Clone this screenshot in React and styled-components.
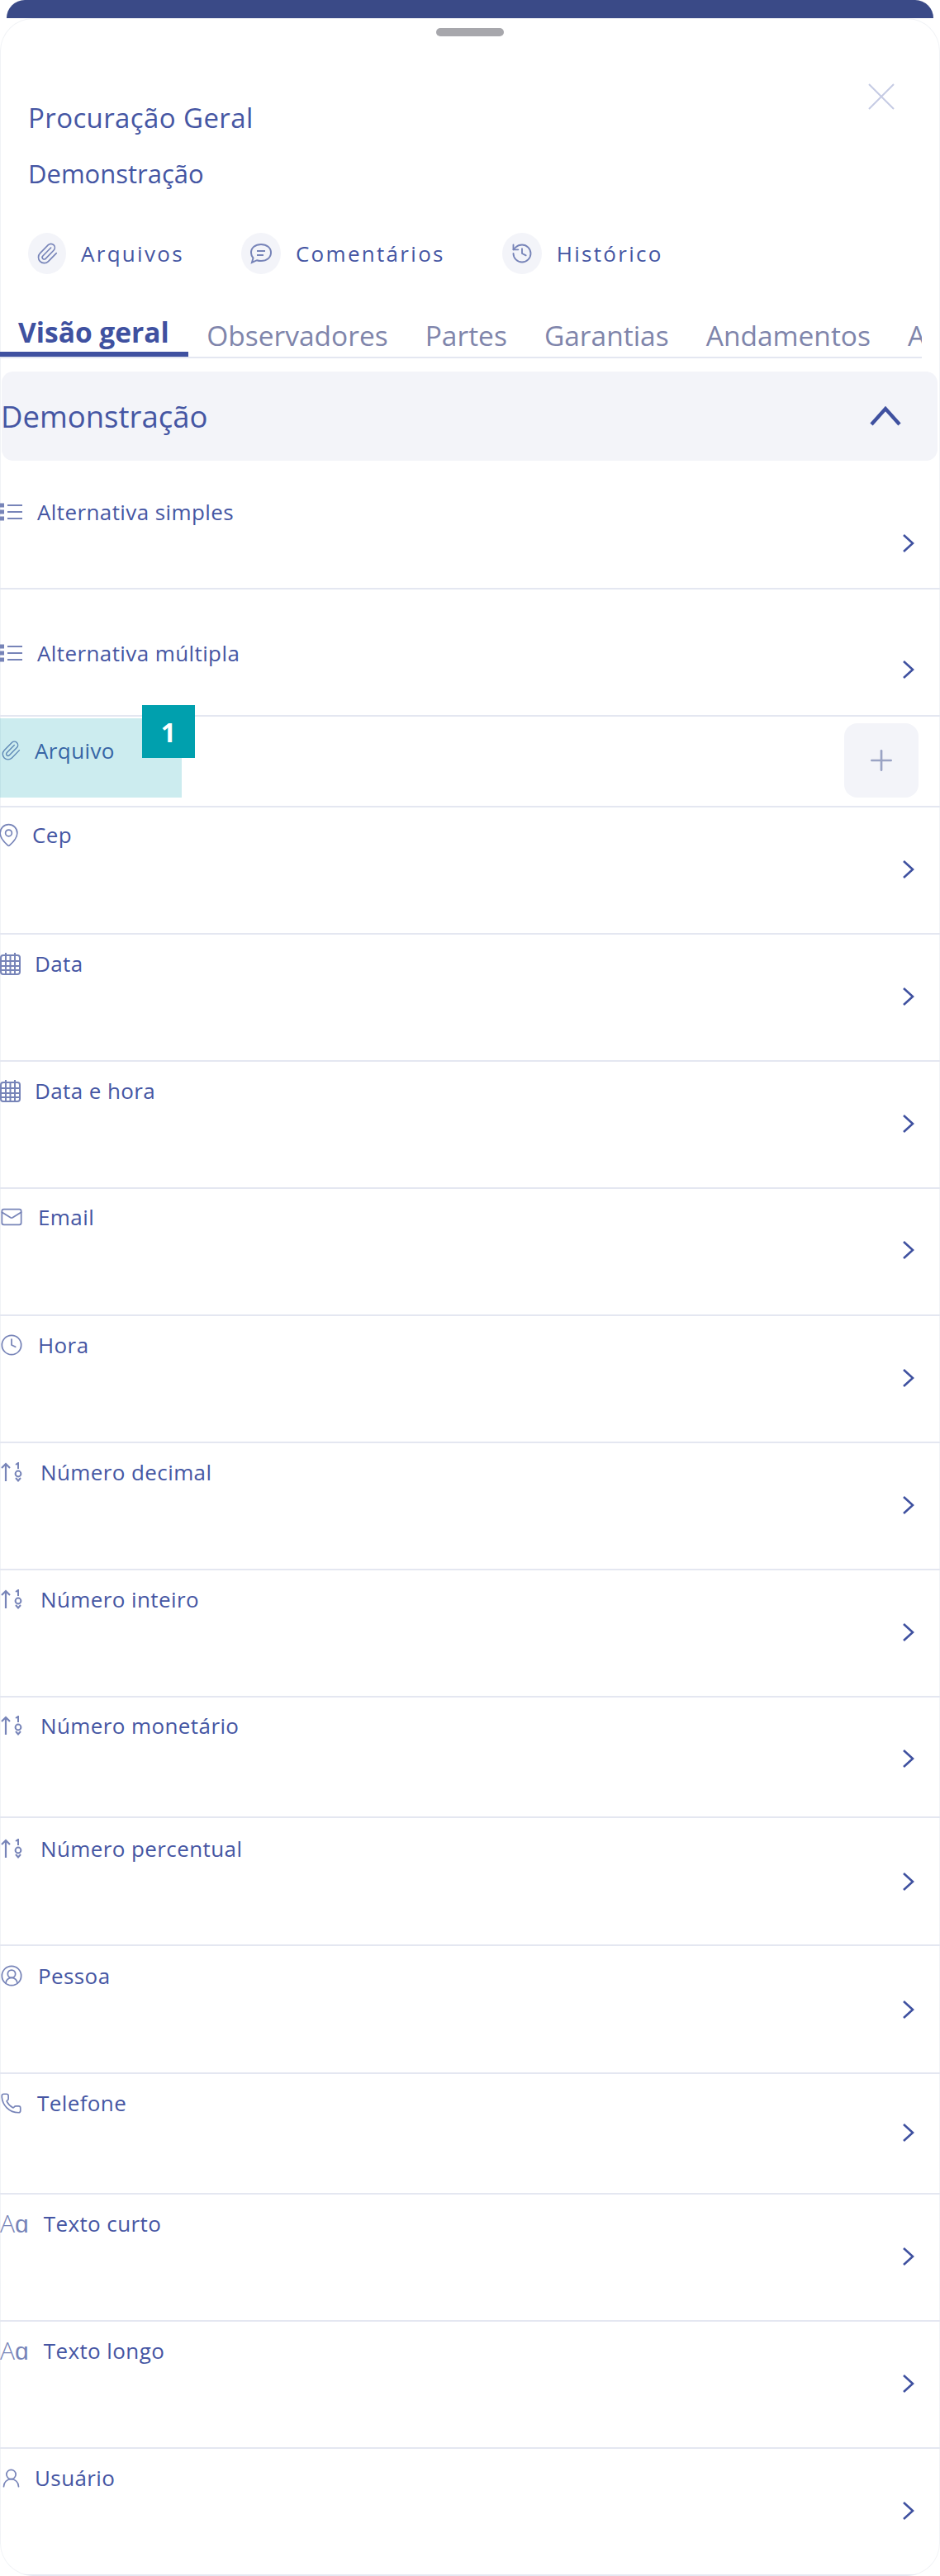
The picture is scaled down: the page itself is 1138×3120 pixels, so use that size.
import React from "react";
import styled, { createGlobalStyle } from "styled-components";
import { Paperclip, History, MapPin, Mail, Clock, CircleUserRound, Phone, UserRound, Plus } from "lucide-react";

const Global = createGlobalStyle`
  html, body { margin: 0; padding: 0; background: #fff; }
  body { font-family: "Open Sans", sans-serif; color: #3f51a0; }
`;

const Page = styled.div`
  width: 1138px;
  height: 3120px;
  overflow: hidden;
`;
const TopBar = styled.div`
  height: 22px;
  margin: 0 8px;
  background: #3a4a87;
  border-radius: 30px 30px 0 0;
`;
const Sheet = styled.div`
  height: 3098px;
  background: #fff;
  box-shadow: inset 0 0 0 1px #f1f3f6;
  border-radius: 40px;
  overflow: hidden;
  padding-top: 12px;
  box-sizing: border-box;
`;
const Handle = styled.div`
  width: 82px;
  height: 10px;
  margin: 0 auto;
  border-radius: 5px;
  background: #a7a7ac;
`;
const Head = styled.div`
  display: flex;
  justify-content: space-between;
  padding: 0 54px 0 34px;
`;
const Titles = styled.div`
  padding-top: 77px;
`;
const Title = styled.div`
  font-size: 33px;
  line-height: 44px;
  font-weight: 500;
  letter-spacing: 0.4px;
  color: #4556a3;
`;
const Subtitle = styled.div`
  font-size: 31px;
  line-height: 44px;
  margin-top: 23px;
  color: #4556a3;
`;
const Close = styled.div`
  margin-top: 56px;
  color: #c5cbe4;
  svg { display: block; }
`;
const Actions = styled.div`
  display: flex;
  padding: 50px 0 0 34px;
  height: 50px;
`;
const Action = styled.div`
  display: flex;
  align-items: center;
  gap: 18px;
  margin-right: ${p => p.$mr}px;
  font-size: 26px;
  letter-spacing: 2.3px;
  color: #4556a3;
`;
const ActionIcon = styled.div`
  width: ${p => p.$w}px;
  height: 50px;
  border-radius: 50%;
  background: #f3f4f9;
  display: flex;
  align-items: center;
  justify-content: center;
  color: #7784b8;
`;
const Tabs = styled.div`
  display: flex;
  margin: 39px 22px 0 0;
  height: 63px;
  box-sizing: border-box;
  border-bottom: 2px solid #e4e7f1;
  overflow: hidden;
  white-space: nowrap;
`;
const Tab = styled.div`
  flex: none;
  box-sizing: border-box;
  height: 61px;
  padding: ${p => (p.$active ? "7px 23px 0 22px" : "9px 22.5px 0")};
  font-size: 33.5px;
  font-weight: ${p => (p.$active ? 700 : 400)};
  line-height: ${p => (p.$active ? 48 : 52)}px;
  color: ${p => (p.$active ? "#3f51a0" : "#7f85ab")};
  border-bottom: ${p => (p.$active ? "6px solid #3f51a0" : "0")};
`;
const Section = styled.div`
  margin: 16px 3px 0 2px;
  height: 108px;
  box-sizing: border-box;
  border-radius: 14px;
  background: #f3f4f9;
  display: flex;
  align-items: center;
  justify-content: space-between;
  padding-right: 43px;
  font-size: 36.5px;
  text-indent: -1px;
  color: #4556a3;
  svg { color: #3f51a0; }
`;
const Rows = styled.div`
  position: relative;
`;
const Row = styled.div`
  height: ${p => p.$h}px;
  box-sizing: border-box;
  border-bottom: 2px solid #e4e7f1;
  padding-top: ${p => p.$top}px;
  display: flex;
  flex-direction: column;
`;
const Label = styled.div`
  display: flex;
  align-items: center;
  height: 30px;
  gap: ${p => p.$gap}px;
  font-size: 26px;
  letter-spacing: 0.4px;
  color: #4556a3;
  svg { flex: none; color: #7784b8; }
`;
const Chevron = styled.div`
  margin: ${p => p.$gap}px 0 0 auto;
  padding-right: 30px;
  color: #3f51a0;
  svg { display: block; }
`;
const AddRow = styled.div`
  height: 110px;
  box-sizing: border-box;
  border-bottom: 2px solid #e4e7f1;
  display: flex;
  justify-content: space-between;
  padding: 8px 26px 0 0;
`;
const AddLabel = styled(Label)`
  margin-top: 18px;
`;
const AddButton = styled.div`
  width: 90px;
  height: 90px;
  border-radius: 16px;
  background: #f3f4f9;
  color: #9aa3c4;
  display: flex;
  align-items: center;
  justify-content: center;
`;
const Highlight = styled.div`
  position: absolute;
  left: 0;
  top: 312px;
  width: 220px;
  height: 96px;
  background: rgba(0, 160, 174, 0.2);
  pointer-events: none;
`;
const Badge = styled.div`
  position: absolute;
  left: 172px;
  top: 296px;
  width: 64px;
  height: 64px;
  background: #00a0ae;
  color: #fff;
  font-size: 32px;
  font-weight: 700;
  display: flex;
  align-items: center;
  justify-content: center;
`;
const Glyph = styled.span`
  font-size: 30px;
  font-weight: 300;
  color: #7784b8;
  line-height: 30px;
  letter-spacing: 0;
`;
const PinIcon = styled(MapPin)`
  margin-left: -5px;
`;

const CloseIcon = () => (
  <svg width="34" height="34" viewBox="0 0 34 34" fill="none" stroke="currentColor" strokeWidth="2">
    <path d="M2 2l30 30M32 2L2 32" />
  </svg>
);
const ChevronUpIcon = () => (
  <svg width="40" height="26" viewBox="0 0 40 26" fill="none" stroke="currentColor" strokeWidth="4.4">
    <path d="M3 23L20 4l17 19" />
  </svg>
);
const ChevronRightIcon = () => (
  <svg width="16" height="24" viewBox="0 0 16 24" fill="none" stroke="currentColor" strokeWidth="2.6">
    <path d="M2 2l11 10L2 22" />
  </svg>
);
const ListIcon = () => (
  <svg width="28" height="24" viewBox="0 0 28 24" fill="none" stroke="currentColor" strokeWidth="2">
    <path d="M9 4h18M9 12h18M9 20h18" />
    <path d="M0 4h5M0 12h5M0 20h5" strokeWidth="5" />
  </svg>
);
const CommentIcon = () => (
  <svg width="28" height="26" viewBox="0 0 28 26" fill="none" stroke="currentColor" strokeWidth="2">
    <path d="M14 2c7 0 12 4 12 10s-5 10-12 10c-2 0-3.500-.3-5-.8L3 24l1.500-5.500C3 16.800 2 14.500 2 12 2 6 7 2 14 2z" />
    <path d="M9 10h10M9 15h8" />
  </svg>
);
const CalendarIcon = () => (
  <svg width="25" height="28" viewBox="0 0 25 28" fill="none" stroke="currentColor" strokeWidth="2">
    <rect x="1" y="4" width="23" height="23" rx="3" />
    <path d="M1 11h23M1 17h23M1 22h23M7 4v23M12.500 4v23M18 4v23M7 1v4M18 1v4" />
  </svg>
);
const NumberIcon = () => (
  <svg width="28" height="24" viewBox="0 0 28 24" fill="none" stroke="currentColor" strokeWidth="2.2">
    <path d="M7 23V2M2 7l5-5 5 5" />
    <path d="M19 3l3-2v7" strokeWidth="2" />
    <circle cx="22" cy="14" r="3.400" strokeWidth="2" />
    <path d="M19 19l3 3.500 3-3.500" strokeWidth="2" />
  </svg>
);

const icons = {
  list: [<ListIcon />, 17],
  pin: [<PinIcon size={31} strokeWidth={1.3} />, 13],
  calendar: [<CalendarIcon />, 17],
  mail: [<Mail size={28} strokeWidth={1.5} />, 18],
  clock: [<Clock size={28} strokeWidth={1.5} />, 18],
  number: [<NumberIcon />, 21],
  person: [<CircleUserRound size={28} strokeWidth={1.5} />, 18],
  phone: [<Phone size={27} strokeWidth={1.5} />, 18],
  text: [<Glyph>Aɑ</Glyph>, 18],
  user: [<UserRound size={27} strokeWidth={1.5} />, 15],
};

const topRows = [
  { icon: "list", text: "Alternativa simples", h: 156, top: 47, gap: 11 },
  { icon: "list", text: "Alternativa múltipla", h: 154, top: 62, gap: -7 },
];
const bottomRows = [
  { icon: "pin", text: "Cep", h: 154, top: 18, gap: 15 },
  { icon: "calendar", text: "Data", h: 154, top: 20, gap: 13 },
  { icon: "calendar", text: "Data e hora", h: 154, top: 20, gap: 13 },
  { icon: "mail", text: "Email", h: 154, top: 19, gap: 13 },
  { icon: "clock", text: "Hora", h: 154, top: 20, gap: 13 },
  { icon: "number", text: "Número decimal", h: 154, top: 20, gap: 13 },
  { icon: "number", text: "Número inteiro", h: 154, top: 20, gap: 13 },
  { icon: "number", text: "Número monetário", h: 146, top: 19, gap: 13 },
  { icon: "number", text: "Número percentual", h: 155, top: 22, gap: 13 },
  { icon: "person", text: "Pessoa", h: 155, top: 21, gap: 14 },
  { icon: "phone", text: "Telefone", h: 146, top: 20, gap: 9 },
  { icon: "text", text: "Texto curto", h: 154, top: 20, gap: 13 },
  { icon: "text", text: "Texto longo", h: 154, top: 20, gap: 13 },
  { icon: "user", text: "Usuário", h: 154, top: 20, gap: 13 },
];

function FieldRow({ icon, text, h, top, gap }) {
  const [glyph, labelGap] = icons[icon];
  return (
    <Row $h={h} $top={top}>
      <Label $gap={labelGap}>{glyph}{text}</Label>
      <Chevron $gap={gap}><ChevronRightIcon /></Chevron>
    </Row>
  );
}

export default function App() {
  return (
    <Page>
      <Global />
      <TopBar />
      <Sheet>
        <Handle />
        <Head>
          <Titles>
            <Title>Procuração Geral</Title>
            <Subtitle>Demonstração</Subtitle>
          </Titles>
          <Close><CloseIcon /></Close>
        </Head>
        <Actions>
          <Action $mr={69}><ActionIcon $w={46}><Paperclip size={28} strokeWidth={1.4} /></ActionIcon>Arquivos</Action>
          <Action $mr={69}><ActionIcon $w={48}><CommentIcon /></ActionIcon>Comentários</Action>
          <Action $mr={0}><ActionIcon $w={48}><History size={28} strokeWidth={1.6} /></ActionIcon>Histórico</Action>
        </Actions>
        <Tabs>
          <Tab $active>Visão geral</Tab>
          <Tab>Observadores</Tab>
          <Tab>Partes</Tab>
          <Tab>Garantias</Tab>
          <Tab>Andamentos</Tab>
          <Tab>Anexos</Tab>
        </Tabs>
        <Section>Demonstração<ChevronUpIcon /></Section>
        <Rows>
          {topRows.map(r => <FieldRow key={r.text} {...r} />)}
          <AddRow>
            <AddLabel $gap={16}><Paperclip size={26} strokeWidth={1.3} />Arquivo</AddLabel>
            <AddButton><Plus size={40} strokeWidth={1.6} /></AddButton>
          </AddRow>
          {bottomRows.map(r => <FieldRow key={r.text} {...r} />)}
          <Highlight />
          <Badge>1</Badge>
        </Rows>
      </Sheet>
    </Page>
  );
}
